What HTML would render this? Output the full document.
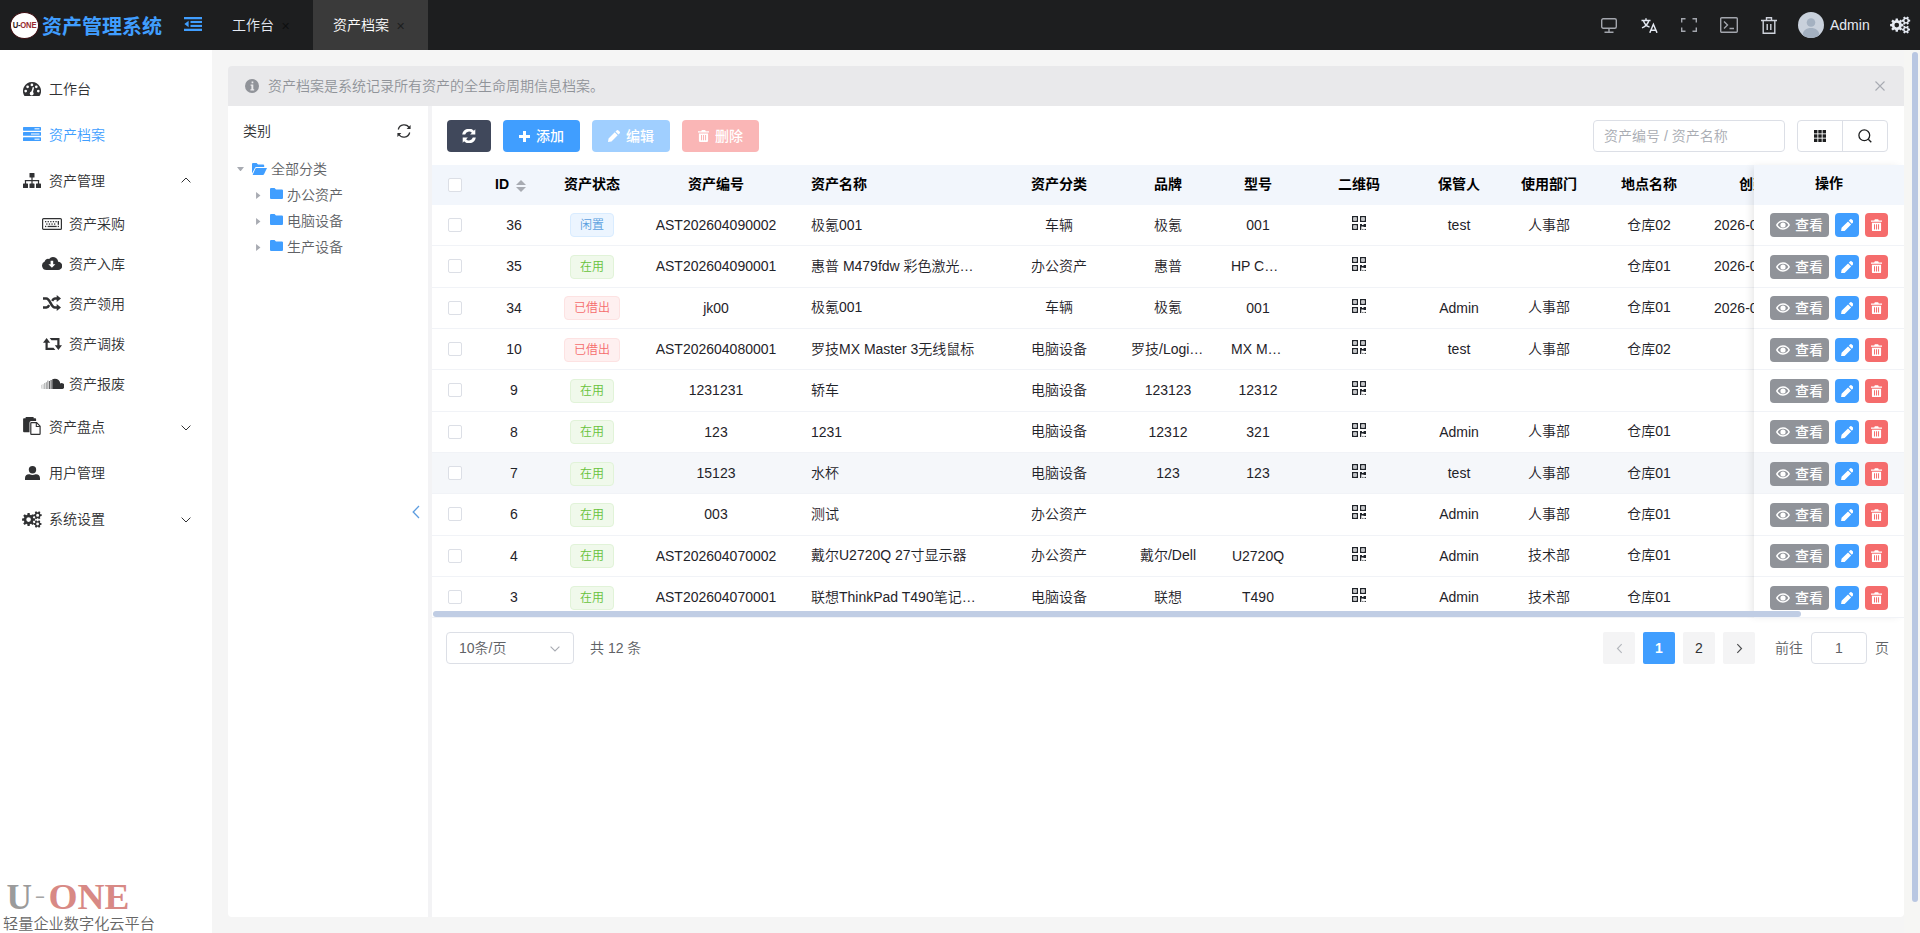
<!DOCTYPE html>
<html lang="zh-CN">
<head>
<meta charset="utf-8">
<title>资产管理系统</title>
<style>
*{box-sizing:border-box;margin:0;padding:0}
html,body{width:1920px;height:933px;overflow:hidden;background:#f5f5f5}
body{font-family:"Liberation Sans","Noto Sans CJK SC",sans-serif;font-size:14px;font-weight:350;color:#303133;position:relative}
svg{display:block}
i,em,b{font-style:normal}
#hd{position:absolute;left:0;top:0;width:1920px;height:50px;background:#1d1e1f}
#logo{position:absolute;left:9.500px;top:12px;width:29px;height:26.500px;border-radius:50%;background:#fff;border:1px solid #3c0c10;overflow:hidden}
#logo span{position:absolute;left:-2px;top:-1px;width:31px;line-height:25px;font-size:9.600px;font-weight:700;letter-spacing:-.3px;text-align:center;color:#2b1a1a;white-space:nowrap;transform:scaleX(.8)}
#logo b{color:#9a2c30;font-weight:700}
#title{position:absolute;left:42px;top:11.500px;font-size:20px;font-weight:700;color:#409eff;line-height:30px;white-space:nowrap}
#fold{position:absolute;left:184px;top:17px}
.tab{position:absolute;top:0;height:50px;line-height:51.500px;color:#e5eaf3;font-size:14px;white-space:nowrap}
.tab i{font-size:11px;margin-left:7px;color:#0e0f10}
.tab.on{background:#3a3a3a;color:#fff}
.tab.on i{color:#1d1e1f}
.hi{position:absolute}
#avatar{position:absolute;left:1798px;top:12px;width:26px;height:26px;border-radius:50%;background:#c9d1dc;overflow:hidden}
#uname{position:absolute;left:1830px;top:0;line-height:50px;color:#e5eaf3;font-size:14px}
#sb{position:absolute;left:0;top:50px;width:212px;height:883px;background:#fff}
.mi{position:absolute;left:0;width:212px;height:46px;line-height:46px;color:#303133;font-size:14px}
.mi span{position:absolute;left:49px;top:0;white-space:nowrap}
.mi svg{position:absolute}
.mi.on{color:#409eff}
.mi.sub{height:40px;line-height:40px}
.mi.sub span{left:69px}
.mi .arr{left:181px}
#brand{position:absolute;left:6px;top:882px}
#slogan{position:absolute;left:3px;top:914px;font-size:15.200px;line-height:20px;color:#666;white-space:nowrap}
#alert{position:absolute;left:228px;top:66px;width:1676px;height:40px;background:#e9e9eb;border-radius:4px 4px 0 0;color:#909399;font-size:14px;line-height:40px}
#alert span{position:absolute;left:40px;top:0;white-space:nowrap}
#tree{position:absolute;left:228px;top:106px;width:200px;height:811px;background:#fff;border-radius:0 0 0 4px}
#split{position:absolute;left:428px;top:106px;width:4px;height:811px;background:#f3f3f5}
#panel{position:absolute;left:432px;top:106px;width:1472px;height:811px;background:#fff;border-radius:0 0 4px 0;overflow:hidden}
#vsb{position:absolute;left:1912px;top:52px;width:6px;height:850px;border-radius:3px;background:#b9c7e2}
#vtrack{position:absolute;left:1904px;top:50px;width:16px;height:883px;background:#f6f6f4}
/* tree */
#tt{position:absolute;left:15px;top:14px;line-height:22px;font-size:14px;color:#303133}
#tref{position:absolute;left:168px;top:17px}
.tn{position:absolute;left:0;width:201px;height:26px;line-height:26px;color:#606266;font-size:14px}
.tn svg.car{position:absolute}
.tn .fi{position:absolute}
.tn .tl{position:absolute;top:0;white-space:nowrap}
#coll{position:absolute;left:184px;top:399px}
/* toolbar */
.btn{position:absolute;top:14px;height:32px;border-radius:4px;color:#fff;font-size:14px;font-weight:500;display:flex;align-items:center;justify-content:center;white-space:nowrap}
.btn em{margin-left:6px;position:relative;top:-1px}
#search{position:absolute;left:1161px;top:14px;width:192px;height:32px;border:1px solid #dcdfe6;border-radius:4px;line-height:30px;padding-left:10px;color:#a8abb2;font-size:14px;white-space:nowrap}
#bgrp{position:absolute;left:1365px;top:14px;width:91px;height:32px;border:1px solid #dcdfe6;border-radius:4px;display:flex}
#bgrp div{flex:1;display:flex;align-items:center;justify-content:center}
#bgrp .g1{border-right:1px solid #dcdfe6}
/* table */
#tbl{position:absolute;left:0;top:0;width:1472px;height:620px}
#thead{position:absolute;left:0;top:59px;width:1472px;height:40px;background:#f2f6fc;font-weight:700;color:#000}
#thead .c{padding-bottom:2px}
#thead .c.cj{padding-bottom:4px}
.tr .c{align-items:flex-start;line-height:24px;padding-top:8px}
.tr .c.cj{padding-top:7.500px}
.tr .c.nt{padding-top:var(--o)}
.tr .c.qr{padding-top:11px}
.tr .cb{margin-top:5px}
#thead .c:first-child{padding-bottom:0}
.tr{position:absolute;left:0;width:1472px;height:41.330px;border-bottom:1px solid #f1f3f7;color:#1f2329}
.tr.hov,.fr.hov{background:#f5f7fa}
.c{position:absolute;top:0;height:100%;display:flex;align-items:center;justify-content:center;white-space:nowrap;overflow:hidden;font-size:14px}
.cb{display:block;width:14px;height:14px;border:1px solid #dcdfe6;border-radius:2px;background:#fff}
.sort{display:inline-block;position:relative;top:1.500px;width:24px;height:14px}
.sort b{position:absolute;left:7px;border:5px solid transparent}
.sort .u{top:-4px;border-bottom-color:#a8abb2}
.sort .d{top:8px;border-top-color:#a8abb2}
.tag{display:inline-block;height:24px;line-height:22px;padding:0 9px;font-size:12px;border-radius:4px;border:1px solid}
.tag.p{background:#ecf5ff;border-color:#d9ecff;color:#5a9fe0}
.tag.s{background:#f0f9eb;border-color:#e1f3d8;color:#67c23a}
.tag.d{background:#fef0f0;border-color:#fde2e2;color:#f56c6c}
#fix{position:absolute;left:1322px;top:59px;width:150px;height:453.330px;background:#fff;box-shadow:-4px 0 8px -2px rgba(0,0,0,.10)}
#fixh{position:absolute;left:0;top:0;width:150px;height:40px;line-height:37px;text-align:center;background:#f2f6fc;font-weight:700;color:#000}
.fr{position:absolute;left:0;width:150px;height:41.330px;border-bottom:1px solid #f1f3f7}
.fr{top:0}
#fix .fr{margin-top:-59px}
.b{position:absolute;top:var(--o);height:24px;border-radius:4px;color:#fff;font-size:14px;font-weight:500;display:flex;align-items:center;justify-content:center;white-space:nowrap}
.b.v{left:16px;width:59px;background:#909399}
.b.v svg{margin-right:5px}
.b.v em{position:relative;top:-1px}
.b.e{left:81px;width:24px;background:#409eff}
.b.x{left:111px;width:23px;background:#f56c6c}
#hsb{position:absolute;left:1px;top:505px;width:1368px;height:6px;border-radius:3px;background:#c0cde4}
/* pagination */
#pg{position:absolute;left:0;top:526px;width:1472px;height:32px;font-size:14px;color:#606266}
#psize{position:absolute;left:14px;top:0;width:128px;height:32px;border:1px solid #dcdfe6;border-radius:4px;line-height:30px;padding-left:12px;color:#606266}
#psize svg{position:absolute;left:103px;top:13px}
#ptotal{position:absolute;left:158px;top:0;line-height:32px;color:#606266}
.pb{position:absolute;top:0;width:32px;height:32px;border-radius:2px;background:#f4f4f5;display:flex;align-items:center;justify-content:center;color:#303133;font-size:14px}
.pb.cur{background:#409eff;color:#fff;font-weight:700}
#pgo{position:absolute;left:1343px;top:0;line-height:32px}
#pin{position:absolute;left:1379px;top:0;width:56px;height:32px;border:1px solid #dcdfe6;border-radius:4px;line-height:30px;text-align:center;color:#606266}
#pye{position:absolute;left:1443px;top:0;line-height:32px}

</style>
</head>
<body>
<div id="hd">
  <div id="logo"><span>U-<b>ONE</b></span></div>
  <div id="title">资产管理系统</div>
  <svg id="fold" width="18" height="14" viewBox="0 0 18 16" preserveAspectRatio="none"><g fill="#409eff"><rect x="0" y="0" width="18" height="2.600"/><rect x="6.500" y="4.500" width="11.500" height="2.400"/><rect x="6.500" y="9" width="11.500" height="2.400"/><rect x="0" y="13.400" width="18" height="2.600"/><path d="M4.600 4.400v7.200L.4 8z"/></g></svg>
  <div class="tab" style="left:212px;width:101px;padding-left:20px">工作台<i>✕</i></div>
  <div class="tab on" style="left:313px;width:115px;padding-left:20px">资产档案<i>✕</i></div>
  <svg class="hi" style="left:1601px;top:18px" width="16" height="15" viewBox="0 0 16 15"><g fill="none" stroke="#a3a6ad" stroke-width="1.400"><rect x=".7" y=".7" width="14.600" height="9.600" rx="1.500"/><path d="M8 10.500v3.500M3.500 14.200h9"/></g></svg><svg class="hi" style="left:1641px;top:18px" width="17" height="15" viewBox="0 0 17 15"><g fill="none" stroke="#e5eaf3" stroke-width="1.400"><path d="M.5 2.500h9M5 .3v2.200M7.800 2.500C7 6 4.500 8.500 1 9.800M2.500 2.700C3.300 5.500 5.600 8 8.600 9.200"/><path d="M8.800 14.800L12.400 6.300l3.600 8.500M10 12.200h4.800" stroke-width="1.500"/></g></svg><svg class="hi" style="left:1681px;top:18px" width="16" height="14" viewBox="0 0 16 14"><path fill="none" stroke="#a3a6ad" stroke-width="1.400" d="M.7 4.500V.7h3.800M11.500.7h3.800v3.800M15.300 9.500v3.800h-3.800M4.500 13.300H.7V9.500"/></svg><svg class="hi" style="left:1720px;top:17px" width="18" height="16" viewBox="0 0 18 16"><g fill="none" stroke="#a3a6ad" stroke-width="1.400"><rect x=".7" y=".7" width="16.600" height="14.600" rx="1"/><path d="M4 4.500L7.500 8 4 11.500M9.500 11.500h4.500"/></g></svg><svg class="hi" style="left:1761px;top:16.500px" width="16" height="17" viewBox="0 0 16 17"><g fill="none" stroke="#cfd3dc" stroke-width="1.400"><path d="M0 3.500h16M5.500 3.300V.8h5v2.500M2.200 3.500v12.700h11.600V3.500M6.200 7v6M9.800 7v6"/></g></svg><svg class="hi" style="left:1890px;top:16px" width="20.5" height="18" viewBox="0 0 20 17"><path fill-rule="evenodd" fill="#e5eaf3" d="M11.34 7.34L13.11 7.52L13.11 9.68L11.34 9.86L10.84 11.06L11.97 12.44L10.44 13.97L9.06 12.84L7.86 13.34L7.68 15.11L5.52 15.11L5.34 13.34L4.14 12.84L2.76 13.97L1.23 12.44L2.36 11.06L1.86 9.86L0.09 9.68L0.09 7.52L1.86 7.34L2.36 6.14L1.23 4.76L2.76 3.23L4.14 4.36L5.34 3.86L5.52 2.09L7.68 2.09L7.86 3.86L9.06 4.36L10.44 3.23L11.97 4.76L10.84 6.14ZM4.30 8.60a2.30 2.30 0 1 0 4.60 0a2.30 2.30 0 1 0 -4.60 0ZM18.42 3.18L19.70 3.28L19.70 5.12L18.42 5.22L17.89 6.14L18.44 7.29L16.86 8.21L16.13 7.15L15.07 7.15L14.34 8.21L12.76 7.29L13.31 6.14L12.78 5.22L11.50 5.12L11.50 3.28L12.78 3.18L13.31 2.26L12.76 1.11L14.34 0.19L15.07 1.25L16.13 1.25L16.86 0.19L18.44 1.11L17.89 2.26ZM14.10 4.20a1.50 1.50 0 1 0 3.00 0a1.50 1.50 0 1 0 -3.00 0ZM18.33 12.02L19.50 12.13L19.50 13.87L18.33 13.98L17.82 14.87L18.31 15.94L16.80 16.82L16.11 15.85L15.09 15.85L14.40 16.82L12.89 15.94L13.38 14.87L12.87 13.98L11.70 13.87L11.70 12.13L12.87 12.02L13.38 11.13L12.89 10.06L14.40 9.18L15.09 10.15L16.11 10.15L16.80 9.18L18.31 10.06L17.82 11.13ZM14.20 13.00a1.40 1.40 0 1 0 2.80 0a1.40 1.40 0 1 0 -2.80 0Z"/></svg>
  <div id="avatar"><svg width="26" height="26" viewBox="0 0 26 26"><circle cx="13" cy="10.500" r="4.300" fill="#a4b1c1"/><path d="M4.500 24c0-5.500 3.800-8 8.500-8s8.500 2.500 8.500 8v2h-17z" fill="#a4b1c1"/></svg></div>
  <div id="uname">Admin</div>
</div>
<div id="sb">
<div class="mi" style="top:16px"><svg style="left:23px;top:16px" width="18" height="14.300" viewBox="0 0 18 14.300"><path fill="#303133" d="M9 0a9 9 0 0 1 7.500 13.950.8.8 0 0 1-.7.350H2.200a.8.8 0 0 1-.7-.350A9 9 0 0 1 9 0z"/><g fill="#fff"><circle cx="2.700" cy="9.100" r="1.350"/><circle cx="4.600" cy="4.800" r="1.350"/><circle cx="8.900" cy="2.900" r="1.350"/><circle cx="13.300" cy="4.800" r="1.350"/><circle cx="15.300" cy="9.100" r="1.350"/><circle cx="8.700" cy="11.500" r="1.900"/><path d="M11.100 5.400L9.700 11.200 8.100 10.600 9.800 5z"/></g></svg><span>工作台</span></div>
<div class="mi on" style="top:62px"><svg style="left:23px;top:15px" width="18" height="14" viewBox="0 0 18 14"><g fill="#409eff"><rect x="0" y="0" width="18" height="3.700" rx=".6"/><rect x="0" y="5.100" width="18" height="3.700" rx=".6"/><rect x="0" y="10.300" width="18" height="3.700" rx=".6"/></g><g fill="#fff" opacity=".85"><rect x="11.500" y="1.200" width="5" height="1.200"/><rect x="8" y="6.400" width="8.500" height="1.200"/><rect x="11.500" y="11.600" width="5" height="1.200"/></g></svg><span>资产档案</span></div>
<div class="mi" style="top:108px"><svg style="left:23px;top:15px" width="18" height="15" viewBox="0 0 18 15"><g fill="#303133"><rect x="6.500" y="0" width="5" height="4.500" rx=".6"/><rect x="0" y="10.500" width="5" height="4.500" rx=".6"/><rect x="6.500" y="10.500" width="5" height="4.500" rx=".6"/><rect x="13" y="10.500" width="5" height="4.500" rx=".6"/><rect x="8.400" y="4" width="1.200" height="7"/><rect x="1.900" y="7" width="14.200" height="1.200"/><rect x="1.900" y="7" width="1.200" height="4"/><rect x="14.900" y="7" width="1.200" height="4"/></g></svg><span>资产管理</span><svg class="arr" style="top:19px" width="10" height="6" viewBox="0 0 10 6"><path d="M.6 5.400L5 1l4.400 4.400" fill="none" stroke="#303133" stroke-width="1"/></svg></div>
<div class="mi sub" style="top:154px"><svg style="left:42px;top:14px" width="20" height="12" viewBox="0 0 20 12"><rect x=".6" y=".6" width="18.800" height="10.800" rx="1" fill="none" stroke="#303133" stroke-width="1.200"/><g fill="#303133"><rect x="3" y="3" width="1.300" height="1.300"/><rect x="5.600" y="3" width="1.300" height="1.300"/><rect x="8.200" y="3" width="1.300" height="1.300"/><rect x="10.800" y="3" width="1.300" height="1.300"/><rect x="13.400" y="3" width="1.300" height="1.300"/><rect x="15.700" y="3" width="1.300" height="3.800"/><rect x="4.200" y="5.400" width="1.300" height="1.300"/><rect x="6.800" y="5.400" width="1.300" height="1.300"/><rect x="9.400" y="5.400" width="1.300" height="1.300"/><rect x="12" y="5.400" width="1.300" height="1.300"/><rect x="3" y="7.800" width="1.300" height="1.300"/><rect x="5.600" y="7.800" width="9.100" height="1.300"/><rect x="15.700" y="7.800" width="1.300" height="1.300"/></g></svg><span>资产采购</span></div>
<div class="mi sub" style="top:194px"><svg style="left:42px;top:12px" width="20" height="14" viewBox="0 0 20 14"><path fill="#303133" d="M16.100 5.700A4 4 0 0 1 16 14H4.500A4.500 4.500 0 0 1 2.700 5.400 3.200 3.200 0 0 1 7.100 3 5 5 0 0 1 16.100 5.700z"/><path fill="#fff" d="M8.600 4.800h2.600v3.400h2.200L9.900 11.800 6.400 8.200h2.200z"/></svg><span>资产入库</span></div>
<div class="mi sub" style="top:234px"><svg style="left:43px;top:10.6px" width="18" height="16" viewBox="0 0 18 16"><g fill="none" stroke="#303133" stroke-width="2.500"><path d="M0 3.500h3.300c3.800 0 4.600 9 8.600 9h2.600"/><path d="M0 12.500h3.300c1.300 0 2.200-1 2.900-2.400M9.100 5.800c.8-1.300 1.600-2.300 2.800-2.300h2.600"/></g><path fill="#303133" d="M13.700 0L18 3.500 13.700 7zM13.700 9L18 12.500 13.700 16z"/></svg><span>资产领用</span></div>
<div class="mi sub" style="top:274px"><svg style="left:42.6px;top:14.1px" width="19" height="12" viewBox="0 0 19 12"><g fill="#303133"><path d="M3.600 0L7.200 4.800H4.700V9.800H10.500L12.400 12H2.500V4.800H0z"/><path d="M15.400 12L11.800 7.200H14.300V2.200H8.500L6.600 0H16.500V7.200H19z"/></g></svg><span>资产调拨</span></div>
<div class="mi sub" style="top:314px"><svg style="left:40px;top:14px" width="24" height="11" viewBox="0 0 24 11"><path fill="#303133" d="M12.300 11V1.300A6 6 0 0 1 14.800.7a5.600 5.600 0 0 1 5.500 4.700 3 3 0 1 1 .7 5.600z"/><g fill="#303133"><rect x="10.600" y="2" width="1" height="9" opacity=".9"/><rect x="9" y="3" width="1" height="8" opacity=".75"/><rect x="7.400" y="2.600" width="1" height="8.400" opacity=".6"/><rect x="5.800" y="4.200" width="1" height="6.800" opacity=".5"/><rect x="4.200" y="5" width="1" height="6" opacity=".4"/><rect x="2.600" y="6.200" width="1" height="4.800" opacity=".3"/><rect x="1" y="6.800" width="1" height="3.800" opacity=".2"/></g></svg><span>资产报废</span></div>
<div class="mi" style="top:354px"><svg style="left:23px;top:13px" width="18" height="18" viewBox="0 0 18 18"><path fill="#303133" d="M1 1.200h11.200a.9.900 0 0 1 .9.900V4H8.200A1.700 1.700 0 0 0 6.500 5.700V15.200H1a.9.900 0 0 1-.9-.9V2.100A.9.900 0 0 1 1 1.200z"/><rect x="2.600" y="0" width="8" height="2.400" rx=".5" fill="#303133"/><path fill="none" stroke="#303133" stroke-width="1.200" d="M8.400 5.700h5.200l3.500 3.500v7.600a.6.600 0 0 1-.6.600H8.400a.6.600 0 0 1-.6-.6V6.300a.6.600 0 0 1 .6-.6z"/><path fill="none" stroke="#303133" stroke-width="1.100" d="M13.300 5.900v3.600h3.600"/></svg><span>资产盘点</span><svg class="arr" style="top:21px" width="10" height="6" viewBox="0 0 10 6"><path d="M.6.6L5 5l4.400-4.400" fill="none" stroke="#303133" stroke-width="1"/></svg></div>
<div class="mi" style="top:400px"><svg style="left:24.5px;top:16px" width="15" height="14" viewBox="0 0 15 14"><circle cx="7.500" cy="3.700" r="3.700" fill="#303133"/><path fill="#303133" d="M0 14v-1.800c0-2.300 1.600-3.900 3.900-3.900h.6a6.400 6.400 0 0 0 6 0h.6c2.300 0 3.900 1.600 3.900 3.900V14z"/></svg><span>用户管理</span></div>
<div class="mi" style="top:446px"><svg style="left:22px;top:14.5px" width="20" height="17" viewBox="0 0 20 17"><path fill-rule="evenodd" fill="#303133" d="M11.34 7.34L13.11 7.52L13.11 9.68L11.34 9.86L10.84 11.06L11.97 12.44L10.44 13.97L9.06 12.84L7.86 13.34L7.68 15.11L5.52 15.11L5.34 13.34L4.14 12.84L2.76 13.97L1.23 12.44L2.36 11.06L1.86 9.86L0.09 9.68L0.09 7.52L1.86 7.34L2.36 6.14L1.23 4.76L2.76 3.23L4.14 4.36L5.34 3.86L5.52 2.09L7.68 2.09L7.86 3.86L9.06 4.36L10.44 3.23L11.97 4.76L10.84 6.14ZM4.30 8.60a2.30 2.30 0 1 0 4.60 0a2.30 2.30 0 1 0 -4.60 0ZM18.42 3.18L19.70 3.28L19.70 5.12L18.42 5.22L17.89 6.14L18.44 7.29L16.86 8.21L16.13 7.15L15.07 7.15L14.34 8.21L12.76 7.29L13.31 6.14L12.78 5.22L11.50 5.12L11.50 3.28L12.78 3.18L13.31 2.26L12.76 1.11L14.34 0.19L15.07 1.25L16.13 1.25L16.86 0.19L18.44 1.11L17.89 2.26ZM14.10 4.20a1.50 1.50 0 1 0 3.00 0a1.50 1.50 0 1 0 -3.00 0ZM18.33 12.02L19.50 12.13L19.50 13.87L18.33 13.98L17.82 14.87L18.31 15.94L16.80 16.82L16.11 15.85L15.09 15.85L14.40 16.82L12.89 15.94L13.38 14.87L12.87 13.98L11.70 13.87L11.70 12.13L12.87 12.02L13.38 11.13L12.89 10.06L14.40 9.18L15.09 10.15L16.11 10.15L16.80 9.18L18.31 10.06L17.82 11.13ZM14.20 13.00a1.40 1.40 0 1 0 2.80 0a1.40 1.40 0 1 0 -2.80 0Z"/></svg><span>系统设置</span><svg class="arr" style="top:21px" width="10" height="6" viewBox="0 0 10 6"><path d="M.6.6L5 5l4.400-4.400" fill="none" stroke="#303133" stroke-width="1"/></svg></div>
</div>
<svg id="brand" width="132" height="30" viewBox="0 0 132 30"><text x=".5" y="26.700" font-family="Liberation Serif,serif" font-weight="700" font-size="36" fill="#9b9b9b" textLength="25.500" lengthAdjust="spacingAndGlyphs">U</text><text x="28.500" y="21.300" font-family="Liberation Sans,sans-serif" font-size="20" fill="#a5a5a5" textLength="11" lengthAdjust="spacingAndGlyphs">-</text><text x="42.500" y="26.700" font-family="Liberation Serif,serif" font-weight="700" font-size="36" fill="#d88985" textLength="81" lengthAdjust="spacingAndGlyphs">ONE</text></svg>
<div id="slogan">轻量企业数字化云平台</div>
<div id="vtrack"></div>
<div id="vsb"></div>
<div id="alert"><svg style="position:absolute;left:17px;top:13px" width="14" height="14" viewBox="0 0 14 14"><circle cx="7" cy="7" r="7" fill="#909399"/><path fill="#e9e9eb" d="M6.600 2.600h1.700v1.700H6.600zM5.600 5.600h2.700v4.600h.9v1.200H5.400v-1.200h1V6.800h-.8z"/></svg><span>资产档案是系统记录所有资产的全生命周期信息档案。</span><svg style="position:absolute;left:1647px;top:15px" width="10" height="10" viewBox="0 0 10 10"><path d="M.5.5l9 9M9.500.5l-9 9" stroke="#a8abb2" stroke-width="1.100"/></svg></div>
<div id="tree">
<div id="tt">类别</div>
<div id="tref"><svg width="16" height="16" viewBox="0 0 16 16"><g fill="none" stroke="#303133" stroke-width="1.300"><path d="M2.300 6.500A6 6 0 0 1 13.400 5"/><path d="M13.700 9.500A6 6 0 0 1 2.600 11"/></g><path fill="#303133" d="M14.600 2v4h-4zM1.400 14v-4h4z"/></svg></div>
<div class="tn" style="top:49.500px"><svg class="car" style="left:8.500px;top:11px" width="7" height="4.500" viewBox="0 0 8 5"><path d="M0 0h8L4 5z" fill="#a8abb2"/></svg><span class="fi" style="left:24px;top:7px"><svg width="15" height="12" viewBox="0 0 15 12"><path fill="#409eff" d="M1 0h3.600l1.400 1.500h5.200a1 1 0 0 1 1 1V4H4.300a1.500 1.500 0 0 0-1.400.9L0 10.500V1a1 1 0 0 1 1-1zM4.400 5H15l-3 6.300a1.200 1.200 0 0 1-1.100.7H.6l2.700-6.200A1.200 1.200 0 0 1 4.400 5z"/></svg></span><span class="tl" style="left:43px">全部分类</span></div>
<div class="tn" style="top:76px"><svg class="car" style="left:28px;top:9.500px" width="4.500" height="7" viewBox="0 0 5 8"><path d="M0 0v8l5-4z" fill="#a8abb2"/></svg><span class="fi" style="left:42px;top:6px"><svg width="13" height="11" viewBox="0 0 14 12" preserveAspectRatio="none"><path fill="#409eff" d="M1.200 0h3.700l1.500 1.600h6.400A1.200 1.200 0 0 1 14 2.800v8A1.200 1.200 0 0 1 12.800 12H1.200A1.200 1.200 0 0 1 0 10.800V1.200A1.200 1.200 0 0 1 1.200 0z"/></svg></span><span class="tl" style="left:59px">办公资产</span></div>
<div class="tn" style="top:102px"><svg class="car" style="left:28px;top:9.500px" width="4.500" height="7" viewBox="0 0 5 8"><path d="M0 0v8l5-4z" fill="#a8abb2"/></svg><span class="fi" style="left:42px;top:6px"><svg width="13" height="11" viewBox="0 0 14 12" preserveAspectRatio="none"><path fill="#409eff" d="M1.200 0h3.700l1.500 1.600h6.400A1.200 1.200 0 0 1 14 2.800v8A1.200 1.200 0 0 1 12.800 12H1.200A1.200 1.200 0 0 1 0 10.800V1.200A1.200 1.200 0 0 1 1.200 0z"/></svg></span><span class="tl" style="left:59px">电脑设备</span></div>
<div class="tn" style="top:128px"><svg class="car" style="left:28px;top:9.500px" width="4.500" height="7" viewBox="0 0 5 8"><path d="M0 0v8l5-4z" fill="#a8abb2"/></svg><span class="fi" style="left:42px;top:6px"><svg width="13" height="11" viewBox="0 0 14 12" preserveAspectRatio="none"><path fill="#409eff" d="M1.200 0h3.700l1.500 1.600h6.400A1.200 1.200 0 0 1 14 2.800v8A1.200 1.200 0 0 1 12.800 12H1.200A1.200 1.200 0 0 1 0 10.800V1.200A1.200 1.200 0 0 1 1.200 0z"/></svg></span><span class="tl" style="left:59px">生产设备</span></div>
<svg id="coll" width="8" height="14" viewBox="0 0 8 14"><path d="M7 1L1.200 7 7 13" fill="none" stroke="#5d9de0" stroke-width="1.300"/></svg>
</div>
<div id="split"></div>
<div id="panel">
  <div class="btn" style="left:15px;width:44px;background:#40485b"><svg width="14" height="14" viewBox="0 0 14 14"><g fill="#fff"><path d="M13.300.3v5.200H8.100l1.800-1.800A4 4 0 0 0 3.200 5.500H.2A6.900 6.900 0 0 1 11.900 1.700z"/><path d="M.7 13.700V8.500h5.200L4.100 10.300a4 4 0 0 0 6.700-1.800h3A6.900 6.900 0 0 1 2.100 12.300z"/></g></svg></div>
  <div class="btn" style="left:71px;width:77px;background:#409eff"><svg width="11" height="11" viewBox="0 0 11 11"><path fill="#fff" d="M4 0h3v4H11v3H7V11H4V7H0V4h4z"/></svg><em>添加</em></div>
  <div class="btn" style="left:160px;width:78px;background:#a0cfff"><svg width="12" height="12" viewBox="0 0 13 13"><path fill="#fff" d="M9.300.5a1.400 1.400 0 0 1 2 0l1.200 1.200a1.400 1.400 0 0 1 0 2L11.300 4.900 8.100 1.700zM7.300 2.500l3.200 3.200-6.700 6.700L0 13l.6-3.800z"/></svg><em>编辑</em></div>
  <div class="btn" style="left:250px;width:77px;background:#fab6b6"><svg width="11" height="12" viewBox="0 0 12 13"><path fill="#fff" fill-rule="evenodd" d="M4.200 0h3.600l.7 1.400H12v1.400H0V1.400h3.500zM1 3.800h10V11.600A1.400 1.400 0 0 1 9.600 13H2.400A1.400 1.400 0 0 1 1 11.600zm2.300 1.700v5.700h1.100V5.500zm2.200 0v5.700h1.100V5.500zm2.200 0v5.700h1.100V5.500z"/></svg><em>删除</em></div>
  <div id="search">资产编号 / 资产名称</div>
  <div id="bgrp"><div class="g1"><svg width="12" height="12" viewBox="0 0 12 12"><g fill="#1d1e1f"><rect x="0" y="0" width="3.400" height="3.400"/><rect x="4.300" y="0" width="3.400" height="3.400"/><rect x="8.600" y="0" width="3.400" height="3.400"/><rect x="0" y="4.300" width="3.400" height="3.400"/><rect x="4.300" y="4.300" width="3.400" height="3.400"/><rect x="8.600" y="4.300" width="3.400" height="3.400"/><rect x="0" y="8.600" width="3.400" height="3.400"/><rect x="4.300" y="8.600" width="3.400" height="3.400"/><rect x="8.600" y="8.600" width="3.400" height="3.400"/></g></svg></div><div class="g2"><svg width="14" height="14" viewBox="0 0 14 14"><g fill="none" stroke="#1d1e1f" stroke-width="1.300"><circle cx="6.300" cy="6.300" r="5.400"/><path d="M10.300 10.300l3 3"/></g></svg></div></div>
  <div id="tbl">
<div id="thead">
<div class="c" style="left:0px;width:46px;"><i class="cb"></i></div>
<div class="c" style="left:46px;width:72px;">ID<span class="sort"><b class="u"></b><b class="d"></b></span></div>
<div class="c cj" style="left:119px;width:82px;">资产状态</div>
<div class="c cj" style="left:200px;width:168px;">资产编号</div>
<div class="c cj" style="left:368px;width:190px;justify-content:flex-start;padding-left:11px">资产名称</div>
<div class="c cj" style="left:558px;width:138px;">资产分类</div>
<div class="c cj" style="left:696px;width:80px;">品牌</div>
<div class="c cj" style="left:776px;width:100px;">型号</div>
<div class="c cj" style="left:876px;width:102px;">二维码</div>
<div class="c cj" style="left:978px;width:98px;">保管人</div>
<div class="c cj" style="left:1076px;width:82px;">使用部门</div>
<div class="c cj" style="left:1158px;width:118px;">地点名称</div>
<div class="c cj" style="left:1276px;width:142px;">创建时间<span class="sort"><b class="u"></b><b class="d"></b></span></div>
</div>
<div class="tr" style="top:99.00px;--o:8.00px">
<div class="c" style="left:0px;width:46px;"><i class="cb"></i></div>
<div class="c" style="left:46px;width:72px;">36</div>
<div class="c nt" style="left:119px;width:82px;"><span class="tag p">闲置</span></div>
<div class="c" style="left:200px;width:168px;">AST202604090002</div>
<div class="c cj" style="left:368px;width:190px;justify-content:flex-start;padding-left:11px">极氪001</div>
<div class="c cj" style="left:558px;width:138px;">车辆</div>
<div class="c cj" style="left:696px;width:80px;">极氪</div>
<div class="c" style="left:776px;width:100px;">001</div>
<div class="c qr" style="left:876px;width:102px;"><svg width="14" height="14" viewBox="0 0 14 14"><g fill="none" stroke="#1f2329" stroke-width="1.300"><rect x=".65" y=".65" width="4.700" height="4.700"/><rect x="8.650" y=".65" width="4.700" height="4.700"/><rect x=".65" y="8.650" width="4.700" height="4.700"/></g><g fill="#8a8d93"><rect x="2.300" y="2.300" width="1.400" height="1.400"/><rect x="10.300" y="2.300" width="1.400" height="1.400"/><rect x="2.300" y="10.300" width="1.400" height="1.400"/></g><g fill="#1f2329"><path d="M8 8h2v1h1.600V8H14v3h-2.400v-.5H9.300V14H8z"/><rect x="10.200" y="12.900" width="1.300" height="1.100" opacity=".7"/><rect x="12.600" y="12.900" width="1.300" height="1.100"/></g></svg></div>
<div class="c" style="left:978px;width:98px;">test</div>
<div class="c cj" style="left:1076px;width:82px;">人事部</div>
<div class="c cj" style="left:1158px;width:118px;">仓库02</div>
<div class="c" style="left:1276px;width:142px;justify-content:flex-start;padding-left:6px;">2026-04-09</div>
</div>
<div class="tr" style="top:140.33px;--o:8.67px">
<div class="c" style="left:0px;width:46px;"><i class="cb"></i></div>
<div class="c" style="left:46px;width:72px;">35</div>
<div class="c nt" style="left:119px;width:82px;"><span class="tag s">在用</span></div>
<div class="c" style="left:200px;width:168px;">AST202604090001</div>
<div class="c cj" style="left:368px;width:190px;justify-content:flex-start;padding-left:11px">惠普 M479fdw 彩色激光…</div>
<div class="c cj" style="left:558px;width:138px;">办公资产</div>
<div class="c cj" style="left:696px;width:80px;">惠普</div>
<div class="c" style="left:776px;width:100px;justify-content:flex-start;padding-left:23px;">HP C…</div>
<div class="c qr" style="left:876px;width:102px;"><svg width="14" height="14" viewBox="0 0 14 14"><g fill="none" stroke="#1f2329" stroke-width="1.300"><rect x=".65" y=".65" width="4.700" height="4.700"/><rect x="8.650" y=".65" width="4.700" height="4.700"/><rect x=".65" y="8.650" width="4.700" height="4.700"/></g><g fill="#8a8d93"><rect x="2.300" y="2.300" width="1.400" height="1.400"/><rect x="10.300" y="2.300" width="1.400" height="1.400"/><rect x="2.300" y="10.300" width="1.400" height="1.400"/></g><g fill="#1f2329"><path d="M8 8h2v1h1.600V8H14v3h-2.400v-.5H9.300V14H8z"/><rect x="10.200" y="12.900" width="1.300" height="1.100" opacity=".7"/><rect x="12.600" y="12.900" width="1.300" height="1.100"/></g></svg></div>
<div class="c" style="left:978px;width:98px;"></div>
<div class="c" style="left:1076px;width:82px;"></div>
<div class="c cj" style="left:1158px;width:118px;">仓库01</div>
<div class="c" style="left:1276px;width:142px;justify-content:flex-start;padding-left:6px;">2026-04-09</div>
</div>
<div class="tr" style="top:181.67px;--o:8.33px">
<div class="c" style="left:0px;width:46px;"><i class="cb"></i></div>
<div class="c" style="left:46px;width:72px;">34</div>
<div class="c nt" style="left:119px;width:82px;"><span class="tag d">已借出</span></div>
<div class="c" style="left:200px;width:168px;">jk00</div>
<div class="c cj" style="left:368px;width:190px;justify-content:flex-start;padding-left:11px">极氪001</div>
<div class="c cj" style="left:558px;width:138px;">车辆</div>
<div class="c cj" style="left:696px;width:80px;">极氪</div>
<div class="c" style="left:776px;width:100px;">001</div>
<div class="c qr" style="left:876px;width:102px;"><svg width="14" height="14" viewBox="0 0 14 14"><g fill="none" stroke="#1f2329" stroke-width="1.300"><rect x=".65" y=".65" width="4.700" height="4.700"/><rect x="8.650" y=".65" width="4.700" height="4.700"/><rect x=".65" y="8.650" width="4.700" height="4.700"/></g><g fill="#8a8d93"><rect x="2.300" y="2.300" width="1.400" height="1.400"/><rect x="10.300" y="2.300" width="1.400" height="1.400"/><rect x="2.300" y="10.300" width="1.400" height="1.400"/></g><g fill="#1f2329"><path d="M8 8h2v1h1.600V8H14v3h-2.400v-.5H9.300V14H8z"/><rect x="10.200" y="12.900" width="1.300" height="1.100" opacity=".7"/><rect x="12.600" y="12.900" width="1.300" height="1.100"/></g></svg></div>
<div class="c" style="left:978px;width:98px;">Admin</div>
<div class="c cj" style="left:1076px;width:82px;">人事部</div>
<div class="c cj" style="left:1158px;width:118px;">仓库01</div>
<div class="c" style="left:1276px;width:142px;justify-content:flex-start;padding-left:6px;">2026-04-09</div>
</div>
<div class="tr" style="top:223.00px;--o:9.00px">
<div class="c" style="left:0px;width:46px;"><i class="cb"></i></div>
<div class="c" style="left:46px;width:72px;">10</div>
<div class="c nt" style="left:119px;width:82px;"><span class="tag d">已借出</span></div>
<div class="c" style="left:200px;width:168px;">AST202604080001</div>
<div class="c cj" style="left:368px;width:190px;justify-content:flex-start;padding-left:11px">罗技MX Master 3无线鼠标</div>
<div class="c cj" style="left:558px;width:138px;">电脑设备</div>
<div class="c cj" style="left:696px;width:80px;justify-content:flex-start;padding-left:3px;">罗技/Logi…</div>
<div class="c" style="left:776px;width:100px;justify-content:flex-start;padding-left:23px;">MX M…</div>
<div class="c qr" style="left:876px;width:102px;"><svg width="14" height="14" viewBox="0 0 14 14"><g fill="none" stroke="#1f2329" stroke-width="1.300"><rect x=".65" y=".65" width="4.700" height="4.700"/><rect x="8.650" y=".65" width="4.700" height="4.700"/><rect x=".65" y="8.650" width="4.700" height="4.700"/></g><g fill="#8a8d93"><rect x="2.300" y="2.300" width="1.400" height="1.400"/><rect x="10.300" y="2.300" width="1.400" height="1.400"/><rect x="2.300" y="10.300" width="1.400" height="1.400"/></g><g fill="#1f2329"><path d="M8 8h2v1h1.600V8H14v3h-2.400v-.5H9.300V14H8z"/><rect x="10.200" y="12.900" width="1.300" height="1.100" opacity=".7"/><rect x="12.600" y="12.900" width="1.300" height="1.100"/></g></svg></div>
<div class="c" style="left:978px;width:98px;">test</div>
<div class="c cj" style="left:1076px;width:82px;">人事部</div>
<div class="c cj" style="left:1158px;width:118px;">仓库02</div>
<div class="c" style="left:1276px;width:142px;justify-content:flex-start;padding-left:6px;"></div>
</div>
<div class="tr" style="top:264.33px;--o:8.67px">
<div class="c" style="left:0px;width:46px;"><i class="cb"></i></div>
<div class="c" style="left:46px;width:72px;">9</div>
<div class="c nt" style="left:119px;width:82px;"><span class="tag s">在用</span></div>
<div class="c" style="left:200px;width:168px;">1231231</div>
<div class="c cj" style="left:368px;width:190px;justify-content:flex-start;padding-left:11px">轿车</div>
<div class="c cj" style="left:558px;width:138px;">电脑设备</div>
<div class="c" style="left:696px;width:80px;">123123</div>
<div class="c" style="left:776px;width:100px;">12312</div>
<div class="c qr" style="left:876px;width:102px;"><svg width="14" height="14" viewBox="0 0 14 14"><g fill="none" stroke="#1f2329" stroke-width="1.300"><rect x=".65" y=".65" width="4.700" height="4.700"/><rect x="8.650" y=".65" width="4.700" height="4.700"/><rect x=".65" y="8.650" width="4.700" height="4.700"/></g><g fill="#8a8d93"><rect x="2.300" y="2.300" width="1.400" height="1.400"/><rect x="10.300" y="2.300" width="1.400" height="1.400"/><rect x="2.300" y="10.300" width="1.400" height="1.400"/></g><g fill="#1f2329"><path d="M8 8h2v1h1.600V8H14v3h-2.400v-.5H9.300V14H8z"/><rect x="10.200" y="12.900" width="1.300" height="1.100" opacity=".7"/><rect x="12.600" y="12.900" width="1.300" height="1.100"/></g></svg></div>
<div class="c" style="left:978px;width:98px;"></div>
<div class="c" style="left:1076px;width:82px;"></div>
<div class="c" style="left:1158px;width:118px;"></div>
<div class="c" style="left:1276px;width:142px;justify-content:flex-start;padding-left:6px;"></div>
</div>
<div class="tr" style="top:305.67px;--o:8.83px">
<div class="c" style="left:0px;width:46px;"><i class="cb"></i></div>
<div class="c" style="left:46px;width:72px;">8</div>
<div class="c nt" style="left:119px;width:82px;"><span class="tag s">在用</span></div>
<div class="c" style="left:200px;width:168px;">123</div>
<div class="c" style="left:368px;width:190px;justify-content:flex-start;padding-left:11px">1231</div>
<div class="c cj" style="left:558px;width:138px;">电脑设备</div>
<div class="c" style="left:696px;width:80px;">12312</div>
<div class="c" style="left:776px;width:100px;">321</div>
<div class="c qr" style="left:876px;width:102px;"><svg width="14" height="14" viewBox="0 0 14 14"><g fill="none" stroke="#1f2329" stroke-width="1.300"><rect x=".65" y=".65" width="4.700" height="4.700"/><rect x="8.650" y=".65" width="4.700" height="4.700"/><rect x=".65" y="8.650" width="4.700" height="4.700"/></g><g fill="#8a8d93"><rect x="2.300" y="2.300" width="1.400" height="1.400"/><rect x="10.300" y="2.300" width="1.400" height="1.400"/><rect x="2.300" y="10.300" width="1.400" height="1.400"/></g><g fill="#1f2329"><path d="M8 8h2v1h1.600V8H14v3h-2.400v-.5H9.300V14H8z"/><rect x="10.200" y="12.900" width="1.300" height="1.100" opacity=".7"/><rect x="12.600" y="12.900" width="1.300" height="1.100"/></g></svg></div>
<div class="c" style="left:978px;width:98px;">Admin</div>
<div class="c cj" style="left:1076px;width:82px;">人事部</div>
<div class="c cj" style="left:1158px;width:118px;">仓库01</div>
<div class="c" style="left:1276px;width:142px;justify-content:flex-start;padding-left:6px;"></div>
</div>
<div class="tr hov" style="top:347.00px;--o:9.00px">
<div class="c" style="left:0px;width:46px;"><i class="cb"></i></div>
<div class="c" style="left:46px;width:72px;">7</div>
<div class="c nt" style="left:119px;width:82px;"><span class="tag s">在用</span></div>
<div class="c" style="left:200px;width:168px;">15123</div>
<div class="c cj" style="left:368px;width:190px;justify-content:flex-start;padding-left:11px">水杯</div>
<div class="c cj" style="left:558px;width:138px;">电脑设备</div>
<div class="c" style="left:696px;width:80px;">123</div>
<div class="c" style="left:776px;width:100px;">123</div>
<div class="c qr" style="left:876px;width:102px;"><svg width="14" height="14" viewBox="0 0 14 14"><g fill="none" stroke="#1f2329" stroke-width="1.300"><rect x=".65" y=".65" width="4.700" height="4.700"/><rect x="8.650" y=".65" width="4.700" height="4.700"/><rect x=".65" y="8.650" width="4.700" height="4.700"/></g><g fill="#8a8d93"><rect x="2.300" y="2.300" width="1.400" height="1.400"/><rect x="10.300" y="2.300" width="1.400" height="1.400"/><rect x="2.300" y="10.300" width="1.400" height="1.400"/></g><g fill="#1f2329"><path d="M8 8h2v1h1.600V8H14v3h-2.400v-.5H9.300V14H8z"/><rect x="10.200" y="12.900" width="1.300" height="1.100" opacity=".7"/><rect x="12.600" y="12.900" width="1.300" height="1.100"/></g></svg></div>
<div class="c" style="left:978px;width:98px;">test</div>
<div class="c cj" style="left:1076px;width:82px;">人事部</div>
<div class="c cj" style="left:1158px;width:118px;">仓库01</div>
<div class="c" style="left:1276px;width:142px;justify-content:flex-start;padding-left:6px;"></div>
</div>
<div class="tr" style="top:388.33px;--o:8.67px">
<div class="c" style="left:0px;width:46px;"><i class="cb"></i></div>
<div class="c" style="left:46px;width:72px;">6</div>
<div class="c nt" style="left:119px;width:82px;"><span class="tag s">在用</span></div>
<div class="c" style="left:200px;width:168px;">003</div>
<div class="c cj" style="left:368px;width:190px;justify-content:flex-start;padding-left:11px">测试</div>
<div class="c cj" style="left:558px;width:138px;">办公资产</div>
<div class="c" style="left:696px;width:80px;"></div>
<div class="c" style="left:776px;width:100px;"></div>
<div class="c qr" style="left:876px;width:102px;"><svg width="14" height="14" viewBox="0 0 14 14"><g fill="none" stroke="#1f2329" stroke-width="1.300"><rect x=".65" y=".65" width="4.700" height="4.700"/><rect x="8.650" y=".65" width="4.700" height="4.700"/><rect x=".65" y="8.650" width="4.700" height="4.700"/></g><g fill="#8a8d93"><rect x="2.300" y="2.300" width="1.400" height="1.400"/><rect x="10.300" y="2.300" width="1.400" height="1.400"/><rect x="2.300" y="10.300" width="1.400" height="1.400"/></g><g fill="#1f2329"><path d="M8 8h2v1h1.600V8H14v3h-2.400v-.5H9.300V14H8z"/><rect x="10.200" y="12.900" width="1.300" height="1.100" opacity=".7"/><rect x="12.600" y="12.900" width="1.300" height="1.100"/></g></svg></div>
<div class="c" style="left:978px;width:98px;">Admin</div>
<div class="c cj" style="left:1076px;width:82px;">人事部</div>
<div class="c cj" style="left:1158px;width:118px;">仓库01</div>
<div class="c" style="left:1276px;width:142px;justify-content:flex-start;padding-left:6px;"></div>
</div>
<div class="tr" style="top:429.67px;--o:8.33px">
<div class="c" style="left:0px;width:46px;"><i class="cb"></i></div>
<div class="c" style="left:46px;width:72px;">4</div>
<div class="c nt" style="left:119px;width:82px;"><span class="tag s">在用</span></div>
<div class="c" style="left:200px;width:168px;">AST202604070002</div>
<div class="c cj" style="left:368px;width:190px;justify-content:flex-start;padding-left:11px">戴尔U2720Q 27寸显示器</div>
<div class="c cj" style="left:558px;width:138px;">办公资产</div>
<div class="c cj" style="left:696px;width:80px;">戴尔/Dell</div>
<div class="c" style="left:776px;width:100px;">U2720Q</div>
<div class="c qr" style="left:876px;width:102px;"><svg width="14" height="14" viewBox="0 0 14 14"><g fill="none" stroke="#1f2329" stroke-width="1.300"><rect x=".65" y=".65" width="4.700" height="4.700"/><rect x="8.650" y=".65" width="4.700" height="4.700"/><rect x=".65" y="8.650" width="4.700" height="4.700"/></g><g fill="#8a8d93"><rect x="2.300" y="2.300" width="1.400" height="1.400"/><rect x="10.300" y="2.300" width="1.400" height="1.400"/><rect x="2.300" y="10.300" width="1.400" height="1.400"/></g><g fill="#1f2329"><path d="M8 8h2v1h1.600V8H14v3h-2.400v-.5H9.300V14H8z"/><rect x="10.200" y="12.900" width="1.300" height="1.100" opacity=".7"/><rect x="12.600" y="12.900" width="1.300" height="1.100"/></g></svg></div>
<div class="c" style="left:978px;width:98px;">Admin</div>
<div class="c cj" style="left:1076px;width:82px;">技术部</div>
<div class="c cj" style="left:1158px;width:118px;">仓库01</div>
<div class="c" style="left:1276px;width:142px;justify-content:flex-start;padding-left:6px;"></div>
</div>
<div class="tr" style="top:471.00px;--o:9.00px">
<div class="c" style="left:0px;width:46px;"><i class="cb"></i></div>
<div class="c" style="left:46px;width:72px;">3</div>
<div class="c nt" style="left:119px;width:82px;"><span class="tag s">在用</span></div>
<div class="c" style="left:200px;width:168px;">AST202604070001</div>
<div class="c cj" style="left:368px;width:190px;justify-content:flex-start;padding-left:11px">联想ThinkPad T490笔记…</div>
<div class="c cj" style="left:558px;width:138px;">电脑设备</div>
<div class="c cj" style="left:696px;width:80px;">联想</div>
<div class="c" style="left:776px;width:100px;">T490</div>
<div class="c qr" style="left:876px;width:102px;"><svg width="14" height="14" viewBox="0 0 14 14"><g fill="none" stroke="#1f2329" stroke-width="1.300"><rect x=".65" y=".65" width="4.700" height="4.700"/><rect x="8.650" y=".65" width="4.700" height="4.700"/><rect x=".65" y="8.650" width="4.700" height="4.700"/></g><g fill="#8a8d93"><rect x="2.300" y="2.300" width="1.400" height="1.400"/><rect x="10.300" y="2.300" width="1.400" height="1.400"/><rect x="2.300" y="10.300" width="1.400" height="1.400"/></g><g fill="#1f2329"><path d="M8 8h2v1h1.600V8H14v3h-2.400v-.5H9.300V14H8z"/><rect x="10.200" y="12.900" width="1.300" height="1.100" opacity=".7"/><rect x="12.600" y="12.900" width="1.300" height="1.100"/></g></svg></div>
<div class="c" style="left:978px;width:98px;">Admin</div>
<div class="c cj" style="left:1076px;width:82px;">技术部</div>
<div class="c cj" style="left:1158px;width:118px;">仓库01</div>
<div class="c" style="left:1276px;width:142px;justify-content:flex-start;padding-left:6px;"></div>
</div>
<div id="fix"><div id="fixh">操作</div>
<div class="fr" style="top:99.00px;--o:8.00px"><span class="b v"><svg width="14" height="10" viewBox="0 0 15 10"><path fill="#fff" fill-rule="evenodd" d="M7.500 0C11 0 13.800 2.300 15 5c-1.200 2.700-4 5-7.500 5S1.200 7.700 0 5C1.200 2.300 4 0 7.500 0zM7.500 1.600C5 1.600 3 2.900 1.800 5c1.200 2.100 3.200 3.400 5.700 3.400s4.500-1.300 5.700-3.400C12 2.900 10 1.600 7.500 1.600zM7.500 2.200a2.800 2.800 0 1 1 0 5.600 2.800 2.800 0 0 1 0-5.600z"/></svg><em>查看</em></span><span class="b e"><svg width="12.5" height="12.5" viewBox="0 0 13 13"><path fill="#fff" d="M9.300.5a1.400 1.400 0 0 1 2 0l1.200 1.200a1.400 1.400 0 0 1 0 2L11.300 4.900 8.100 1.700zM7.300 2.500l3.200 3.200-6.700 6.700L0 13l.6-3.800z"/></svg></span><span class="b x"><svg width="11" height="12.5" viewBox="0 0 12 13"><path fill="#fff" fill-rule="evenodd" d="M4.200 0h3.600l.7 1.400H12v1.400H0V1.400h3.500zM1 3.800h10V11.600A1.400 1.400 0 0 1 9.600 13H2.400A1.400 1.400 0 0 1 1 11.600zm2.300 1.700v5.700h1.100V5.500zm2.200 0v5.700h1.100V5.500zm2.200 0v5.700h1.100V5.500z"/></svg></span></div>
<div class="fr" style="top:140.33px;--o:8.67px"><span class="b v"><svg width="14" height="10" viewBox="0 0 15 10"><path fill="#fff" fill-rule="evenodd" d="M7.500 0C11 0 13.800 2.300 15 5c-1.200 2.700-4 5-7.500 5S1.200 7.700 0 5C1.200 2.300 4 0 7.500 0zM7.500 1.600C5 1.600 3 2.900 1.800 5c1.200 2.100 3.200 3.400 5.700 3.400s4.500-1.300 5.700-3.400C12 2.900 10 1.600 7.500 1.600zM7.500 2.200a2.800 2.800 0 1 1 0 5.600 2.800 2.800 0 0 1 0-5.600z"/></svg><em>查看</em></span><span class="b e"><svg width="12.5" height="12.5" viewBox="0 0 13 13"><path fill="#fff" d="M9.300.5a1.400 1.400 0 0 1 2 0l1.200 1.200a1.400 1.400 0 0 1 0 2L11.300 4.900 8.100 1.700zM7.300 2.500l3.200 3.200-6.700 6.700L0 13l.6-3.800z"/></svg></span><span class="b x"><svg width="11" height="12.5" viewBox="0 0 12 13"><path fill="#fff" fill-rule="evenodd" d="M4.200 0h3.600l.7 1.400H12v1.400H0V1.400h3.500zM1 3.800h10V11.600A1.400 1.400 0 0 1 9.600 13H2.400A1.400 1.400 0 0 1 1 11.600zm2.300 1.700v5.700h1.100V5.500zm2.200 0v5.700h1.100V5.500zm2.200 0v5.700h1.100V5.500z"/></svg></span></div>
<div class="fr" style="top:181.67px;--o:8.33px"><span class="b v"><svg width="14" height="10" viewBox="0 0 15 10"><path fill="#fff" fill-rule="evenodd" d="M7.500 0C11 0 13.800 2.300 15 5c-1.200 2.700-4 5-7.500 5S1.200 7.700 0 5C1.200 2.300 4 0 7.500 0zM7.500 1.600C5 1.600 3 2.900 1.800 5c1.200 2.100 3.200 3.400 5.700 3.400s4.500-1.300 5.700-3.400C12 2.900 10 1.600 7.500 1.600zM7.500 2.200a2.800 2.800 0 1 1 0 5.600 2.800 2.800 0 0 1 0-5.600z"/></svg><em>查看</em></span><span class="b e"><svg width="12.5" height="12.5" viewBox="0 0 13 13"><path fill="#fff" d="M9.300.5a1.400 1.400 0 0 1 2 0l1.200 1.200a1.400 1.400 0 0 1 0 2L11.300 4.900 8.100 1.700zM7.300 2.500l3.200 3.200-6.700 6.700L0 13l.6-3.800z"/></svg></span><span class="b x"><svg width="11" height="12.5" viewBox="0 0 12 13"><path fill="#fff" fill-rule="evenodd" d="M4.200 0h3.600l.7 1.400H12v1.400H0V1.400h3.500zM1 3.800h10V11.600A1.400 1.400 0 0 1 9.600 13H2.400A1.400 1.400 0 0 1 1 11.600zm2.300 1.700v5.700h1.100V5.500zm2.200 0v5.700h1.100V5.500zm2.200 0v5.700h1.100V5.500z"/></svg></span></div>
<div class="fr" style="top:223.00px;--o:9.00px"><span class="b v"><svg width="14" height="10" viewBox="0 0 15 10"><path fill="#fff" fill-rule="evenodd" d="M7.500 0C11 0 13.800 2.300 15 5c-1.200 2.700-4 5-7.500 5S1.200 7.700 0 5C1.200 2.300 4 0 7.500 0zM7.500 1.600C5 1.600 3 2.900 1.800 5c1.200 2.100 3.200 3.400 5.700 3.400s4.500-1.300 5.700-3.400C12 2.900 10 1.600 7.500 1.600zM7.500 2.200a2.800 2.800 0 1 1 0 5.600 2.800 2.800 0 0 1 0-5.600z"/></svg><em>查看</em></span><span class="b e"><svg width="12.5" height="12.5" viewBox="0 0 13 13"><path fill="#fff" d="M9.300.5a1.400 1.400 0 0 1 2 0l1.200 1.200a1.400 1.400 0 0 1 0 2L11.300 4.900 8.100 1.700zM7.300 2.500l3.200 3.200-6.700 6.700L0 13l.6-3.800z"/></svg></span><span class="b x"><svg width="11" height="12.5" viewBox="0 0 12 13"><path fill="#fff" fill-rule="evenodd" d="M4.200 0h3.600l.7 1.400H12v1.400H0V1.400h3.500zM1 3.800h10V11.600A1.400 1.400 0 0 1 9.600 13H2.400A1.400 1.400 0 0 1 1 11.600zm2.300 1.700v5.700h1.100V5.500zm2.200 0v5.700h1.100V5.500zm2.200 0v5.700h1.100V5.500z"/></svg></span></div>
<div class="fr" style="top:264.33px;--o:8.67px"><span class="b v"><svg width="14" height="10" viewBox="0 0 15 10"><path fill="#fff" fill-rule="evenodd" d="M7.500 0C11 0 13.800 2.300 15 5c-1.200 2.700-4 5-7.500 5S1.200 7.700 0 5C1.200 2.300 4 0 7.500 0zM7.500 1.600C5 1.600 3 2.900 1.800 5c1.200 2.100 3.200 3.400 5.700 3.400s4.500-1.300 5.700-3.400C12 2.900 10 1.600 7.500 1.600zM7.500 2.200a2.800 2.800 0 1 1 0 5.600 2.800 2.800 0 0 1 0-5.600z"/></svg><em>查看</em></span><span class="b e"><svg width="12.5" height="12.5" viewBox="0 0 13 13"><path fill="#fff" d="M9.300.5a1.400 1.400 0 0 1 2 0l1.200 1.200a1.400 1.400 0 0 1 0 2L11.300 4.900 8.100 1.700zM7.300 2.500l3.200 3.200-6.700 6.700L0 13l.6-3.800z"/></svg></span><span class="b x"><svg width="11" height="12.5" viewBox="0 0 12 13"><path fill="#fff" fill-rule="evenodd" d="M4.200 0h3.600l.7 1.400H12v1.400H0V1.400h3.500zM1 3.800h10V11.600A1.400 1.400 0 0 1 9.600 13H2.400A1.400 1.400 0 0 1 1 11.600zm2.300 1.700v5.700h1.100V5.500zm2.200 0v5.700h1.100V5.500zm2.200 0v5.700h1.100V5.500z"/></svg></span></div>
<div class="fr" style="top:305.67px;--o:8.83px"><span class="b v"><svg width="14" height="10" viewBox="0 0 15 10"><path fill="#fff" fill-rule="evenodd" d="M7.500 0C11 0 13.800 2.300 15 5c-1.200 2.700-4 5-7.500 5S1.200 7.700 0 5C1.200 2.300 4 0 7.500 0zM7.500 1.600C5 1.600 3 2.900 1.800 5c1.200 2.100 3.200 3.400 5.700 3.400s4.500-1.300 5.700-3.400C12 2.900 10 1.600 7.500 1.600zM7.500 2.200a2.800 2.800 0 1 1 0 5.600 2.800 2.800 0 0 1 0-5.600z"/></svg><em>查看</em></span><span class="b e"><svg width="12.5" height="12.5" viewBox="0 0 13 13"><path fill="#fff" d="M9.300.5a1.400 1.400 0 0 1 2 0l1.200 1.200a1.400 1.400 0 0 1 0 2L11.300 4.900 8.100 1.700zM7.300 2.500l3.200 3.200-6.700 6.700L0 13l.6-3.800z"/></svg></span><span class="b x"><svg width="11" height="12.5" viewBox="0 0 12 13"><path fill="#fff" fill-rule="evenodd" d="M4.200 0h3.600l.7 1.400H12v1.400H0V1.400h3.500zM1 3.800h10V11.600A1.400 1.400 0 0 1 9.600 13H2.400A1.400 1.400 0 0 1 1 11.600zm2.300 1.700v5.700h1.100V5.500zm2.200 0v5.700h1.100V5.500zm2.200 0v5.700h1.100V5.500z"/></svg></span></div>
<div class="fr hov" style="top:347.00px;--o:9.00px"><span class="b v"><svg width="14" height="10" viewBox="0 0 15 10"><path fill="#fff" fill-rule="evenodd" d="M7.500 0C11 0 13.800 2.300 15 5c-1.200 2.700-4 5-7.500 5S1.200 7.700 0 5C1.200 2.300 4 0 7.500 0zM7.500 1.600C5 1.600 3 2.900 1.800 5c1.200 2.100 3.200 3.400 5.700 3.400s4.500-1.300 5.700-3.400C12 2.900 10 1.600 7.500 1.600zM7.500 2.200a2.800 2.800 0 1 1 0 5.600 2.800 2.800 0 0 1 0-5.600z"/></svg><em>查看</em></span><span class="b e"><svg width="12.5" height="12.5" viewBox="0 0 13 13"><path fill="#fff" d="M9.300.5a1.400 1.400 0 0 1 2 0l1.200 1.200a1.400 1.400 0 0 1 0 2L11.300 4.900 8.100 1.700zM7.300 2.500l3.200 3.200-6.700 6.700L0 13l.6-3.800z"/></svg></span><span class="b x"><svg width="11" height="12.5" viewBox="0 0 12 13"><path fill="#fff" fill-rule="evenodd" d="M4.200 0h3.600l.7 1.400H12v1.400H0V1.400h3.500zM1 3.800h10V11.600A1.400 1.400 0 0 1 9.600 13H2.400A1.400 1.400 0 0 1 1 11.600zm2.300 1.700v5.700h1.100V5.500zm2.200 0v5.700h1.100V5.500zm2.200 0v5.700h1.100V5.500z"/></svg></span></div>
<div class="fr" style="top:388.33px;--o:8.67px"><span class="b v"><svg width="14" height="10" viewBox="0 0 15 10"><path fill="#fff" fill-rule="evenodd" d="M7.500 0C11 0 13.800 2.300 15 5c-1.200 2.700-4 5-7.500 5S1.200 7.700 0 5C1.200 2.300 4 0 7.500 0zM7.500 1.600C5 1.600 3 2.900 1.800 5c1.200 2.100 3.200 3.400 5.700 3.400s4.500-1.300 5.700-3.400C12 2.900 10 1.600 7.500 1.600zM7.500 2.200a2.800 2.800 0 1 1 0 5.600 2.800 2.800 0 0 1 0-5.600z"/></svg><em>查看</em></span><span class="b e"><svg width="12.5" height="12.5" viewBox="0 0 13 13"><path fill="#fff" d="M9.300.5a1.400 1.400 0 0 1 2 0l1.200 1.200a1.400 1.400 0 0 1 0 2L11.300 4.900 8.100 1.700zM7.300 2.500l3.200 3.200-6.700 6.700L0 13l.6-3.800z"/></svg></span><span class="b x"><svg width="11" height="12.5" viewBox="0 0 12 13"><path fill="#fff" fill-rule="evenodd" d="M4.200 0h3.600l.7 1.400H12v1.400H0V1.400h3.500zM1 3.800h10V11.600A1.400 1.400 0 0 1 9.600 13H2.400A1.400 1.400 0 0 1 1 11.600zm2.300 1.700v5.700h1.100V5.500zm2.200 0v5.700h1.100V5.500zm2.200 0v5.700h1.100V5.500z"/></svg></span></div>
<div class="fr" style="top:429.67px;--o:8.33px"><span class="b v"><svg width="14" height="10" viewBox="0 0 15 10"><path fill="#fff" fill-rule="evenodd" d="M7.500 0C11 0 13.800 2.300 15 5c-1.200 2.700-4 5-7.500 5S1.200 7.700 0 5C1.200 2.300 4 0 7.500 0zM7.500 1.600C5 1.600 3 2.900 1.800 5c1.200 2.100 3.200 3.400 5.700 3.400s4.500-1.300 5.700-3.400C12 2.900 10 1.600 7.500 1.600zM7.500 2.200a2.800 2.800 0 1 1 0 5.600 2.800 2.800 0 0 1 0-5.600z"/></svg><em>查看</em></span><span class="b e"><svg width="12.5" height="12.5" viewBox="0 0 13 13"><path fill="#fff" d="M9.300.5a1.400 1.400 0 0 1 2 0l1.200 1.200a1.400 1.400 0 0 1 0 2L11.300 4.900 8.100 1.700zM7.300 2.500l3.200 3.200-6.700 6.700L0 13l.6-3.800z"/></svg></span><span class="b x"><svg width="11" height="12.5" viewBox="0 0 12 13"><path fill="#fff" fill-rule="evenodd" d="M4.200 0h3.600l.7 1.400H12v1.400H0V1.400h3.500zM1 3.800h10V11.600A1.400 1.400 0 0 1 9.600 13H2.400A1.400 1.400 0 0 1 1 11.600zm2.300 1.700v5.700h1.100V5.500zm2.200 0v5.700h1.100V5.500zm2.200 0v5.700h1.100V5.500z"/></svg></span></div>
<div class="fr" style="top:471.00px;--o:9.00px"><span class="b v"><svg width="14" height="10" viewBox="0 0 15 10"><path fill="#fff" fill-rule="evenodd" d="M7.500 0C11 0 13.800 2.300 15 5c-1.200 2.700-4 5-7.500 5S1.200 7.700 0 5C1.200 2.300 4 0 7.500 0zM7.500 1.600C5 1.600 3 2.900 1.800 5c1.200 2.100 3.200 3.400 5.700 3.400s4.500-1.300 5.700-3.400C12 2.900 10 1.600 7.500 1.600zM7.500 2.200a2.800 2.800 0 1 1 0 5.600 2.800 2.800 0 0 1 0-5.600z"/></svg><em>查看</em></span><span class="b e"><svg width="12.5" height="12.5" viewBox="0 0 13 13"><path fill="#fff" d="M9.300.5a1.400 1.400 0 0 1 2 0l1.200 1.200a1.400 1.400 0 0 1 0 2L11.300 4.900 8.100 1.700zM7.300 2.500l3.200 3.200-6.700 6.700L0 13l.6-3.800z"/></svg></span><span class="b x"><svg width="11" height="12.5" viewBox="0 0 12 13"><path fill="#fff" fill-rule="evenodd" d="M4.200 0h3.600l.7 1.400H12v1.400H0V1.400h3.500zM1 3.800h10V11.600A1.400 1.400 0 0 1 9.600 13H2.400A1.400 1.400 0 0 1 1 11.600zm2.300 1.700v5.700h1.100V5.500zm2.200 0v5.700h1.100V5.500zm2.200 0v5.700h1.100V5.500z"/></svg></span></div>
</div>
<div id="hsb"></div>
  </div>
  <div id="pg">
    <div id="psize">10条/页<svg width="10" height="6" viewBox="0 0 10 6"><path d="M.6.6L5 5l4.400-4.400" fill="none" stroke="#a8abb2" stroke-width="1.100"/></svg></div>
    <div id="ptotal">共 12 条</div>
    <div class="pb" style="left:1171px"><svg width="7" height="11" viewBox="0 0 7 11"><path d="M5.700 1.200L1.500 5.500l4.200 4.300" fill="none" stroke="#b4b7bd" stroke-width="1.150"/></svg></div>
    <div class="pb cur" style="left:1211px">1</div>
    <div class="pb" style="left:1251px">2</div>
    <div class="pb" style="left:1291px"><svg width="7" height="11" viewBox="0 0 7 11"><path d="M1.300 1.200l4.200 4.300-4.200 4.300" fill="none" stroke="#4c4d4f" stroke-width="1.150"/></svg></div>
    <div id="pgo">前往</div>
    <div id="pin">1</div>
    <div id="pye">页</div>
  </div>
</div>
</body>
</html>
